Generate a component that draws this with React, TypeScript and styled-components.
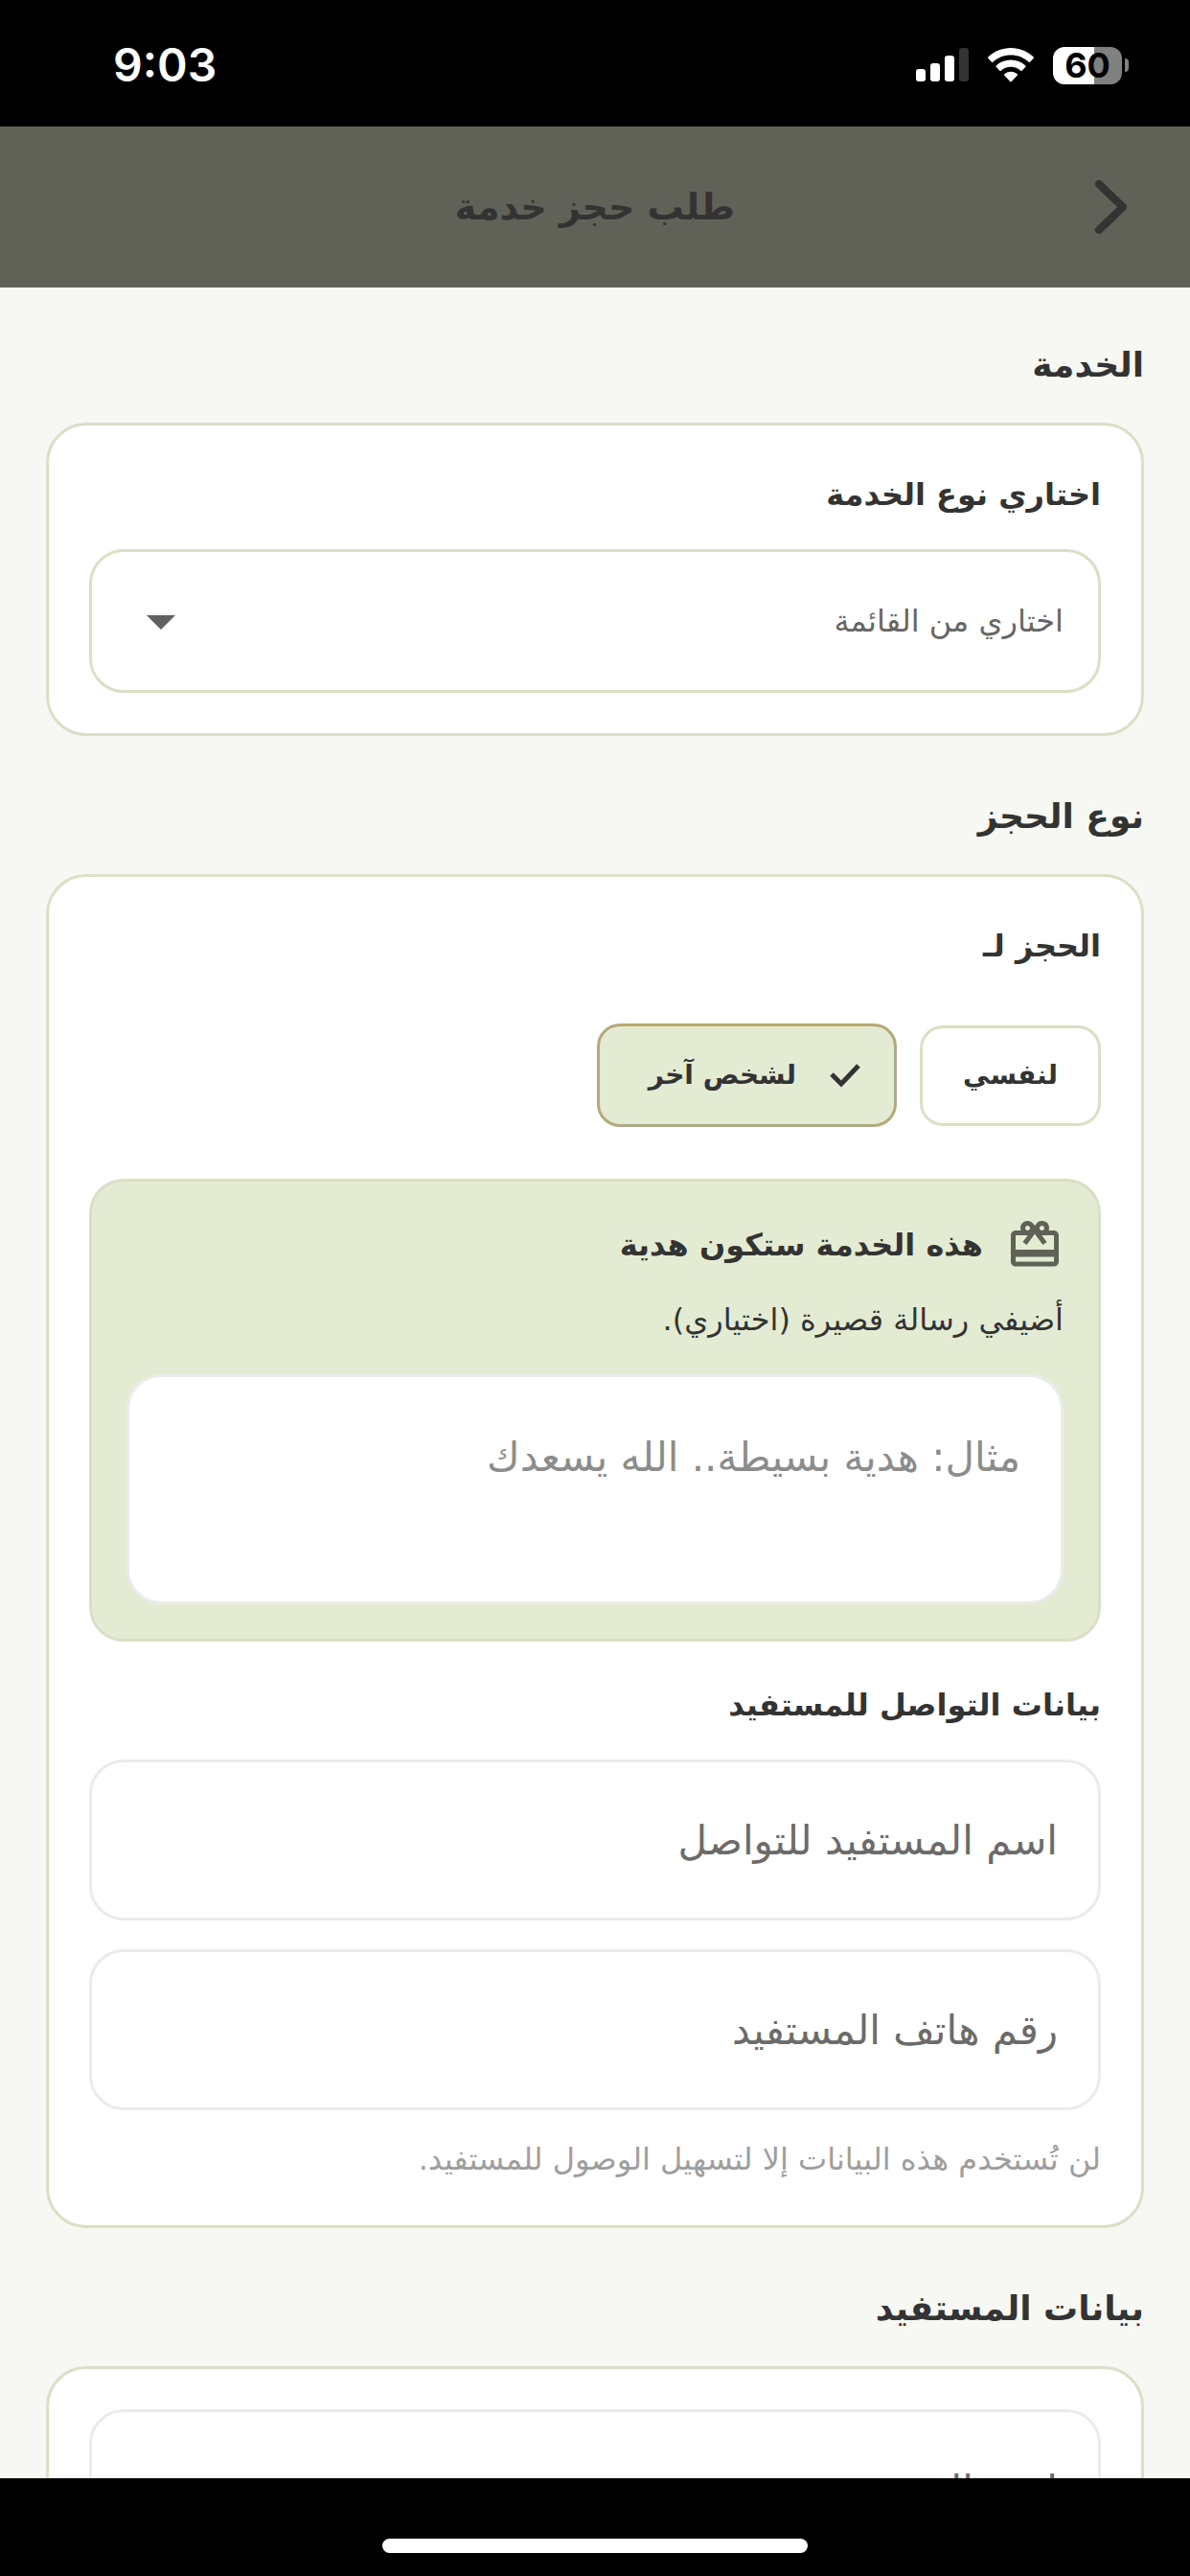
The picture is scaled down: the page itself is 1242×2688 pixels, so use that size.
import React, { useState } from "react";
import styled, { createGlobalStyle } from "styled-components";
import { MdArrowDropDown, MdCardGiftcard } from "react-icons/md";

const color = {
  ink: "#333333",
  olive: "#606157",
  page: "#f7f8f4",
  sage: "#e3ebd3",
  line: "#dbdfc6",
  gold: "#b5a97a",
  inputLine: "#ebebeb",
};

const GlobalStyle = createGlobalStyle`
  *, *::before, *::after { box-sizing: border-box; }
  body {
    margin: 0;
    background: #000000;
    color: ${color.ink};
    font-family: "DejaVu Sans", "Noto Sans", sans-serif;
  }
  button, input, textarea, select { font: inherit; color: inherit; }
  h1, h2, h3, p { margin: 0; }
`;

const Screen = styled.div`
  display: flex;
  flex-direction: column;
  height: 100vh;
  overflow: hidden;
  background: ${color.page};
`;

const StatusBar = styled.div`
  display: flex;
  flex: none;
  align-items: center;
  justify-content: space-between;
  height: 132px;
  padding: 4px 64px 0 118px;
  background: #000000;
  color: #ffffff;
  font-family: Inter, "Liberation Sans", sans-serif;
`;

const Clock = styled.time`
  font-size: 48px;
  font-weight: 600;
  line-height: 60px;
`;

const StatusIcons = styled.div`
  display: flex;
  align-items: center;
  gap: 20px;
`;

const Battery = styled.div`
  display: flex;
  align-items: center;
  gap: 3px;
`;

const BatteryBody = styled.span`
  width: 72px;
  height: 39px;
  border-radius: 12px;
  background: linear-gradient(to right, #ffffff 60%, #808080 60%);
  color: #000000;
  font-size: 36px;
  font-weight: 700;
  line-height: 39px;
  text-align: center;
`;

const BatteryTip = styled.span`
  width: 4px;
  height: 14px;
  border-radius: 0 4px 4px 0;
  background: #808080;
`;

const Header = styled.header`
  display: grid;
  flex: none;
  grid-template-columns: 1fr auto 1fr;
  align-items: center;
  height: 168px;
  padding: 0 48px;
  background: ${color.olive};
`;

const BackButton = styled.button`
  display: flex;
  justify-self: start;
  padding: 0;
  border: 0;
  background: none;
  color: ${color.ink};
`;

const HeaderTitle = styled.h1`
  font-size: 38px;
  font-weight: 700;
  line-height: 72px;
`;

const Content = styled.main`
  display: flex;
  flex: 1;
  flex-direction: column;
  gap: 48px;
  min-height: 0;
  padding: 45px 48px 0;
  overflow: hidden;
`;

const Section = styled.section`
  display: flex;
  flex: none;
  flex-direction: column;
  gap: 24px;
`;

const SectionTitle = styled.h2`
  font-size: 36px;
  font-weight: 700;
  line-height: 72px;
`;

const Card = styled.div`
  display: flex;
  flex-direction: column;
  gap: 36px;
  padding: 42px;
  border: 3px solid ${color.line};
  border-radius: 42px;
  background: #ffffff;
`;

const Group = styled.div`
  display: flex;
  flex-direction: column;
  gap: 27px;
`;

const GroupLabel = styled.h3`
  font-size: 32px;
  font-weight: 700;
  line-height: 60px;
`;

const SelectBox = styled.div`
  display: grid;
  align-items: center;

  > * { grid-area: 1 / 1; }

  > svg {
    justify-self: end;
    margin-inline-end: 39px;
    color: #616161;
    pointer-events: none;
  }
`;

const Select = styled.select`
  width: 100%;
  height: 150px;
  padding: 0 36px;
  border: 3px solid ${color.line};
  border-radius: 36px;
  appearance: none;
  background: #ffffff;
  color: #666666;
  font-size: 32px;
`;

const ChipRow = styled.div`
  display: flex;
  align-items: center;
  gap: 24px;
  padding: 24px 0 18px;
`;

const Chip = styled.button<{ $selected: boolean }>`
  display: flex;
  align-items: center;
  gap: 33px;
  height: ${(p) => (p.$selected ? 108 : 105)}px;
  padding-block: 0;
  padding-inline: ${(p) => (p.$selected ? "33px 51px" : "42px")};
  border: 3px solid ${(p) => (p.$selected ? color.gold : color.line)};
  border-radius: 24px;
  background: ${(p) => (p.$selected ? color.sage : "#ffffff")};
  font-size: 28px;
  font-weight: 700;
  line-height: 48px;
`;

const GiftBox = styled.div`
  display: flex;
  flex-direction: column;
  gap: 21px;
  padding: 36px;
  border: 3px solid ${color.line};
  border-radius: 36px;
  background: ${color.sage};
`;

const GiftHeading = styled.div`
  display: flex;
  align-items: center;
  gap: 24px;

  > svg { color: ${color.olive}; }
`;

const MessageGroup = styled.div`
  display: flex;
  flex-direction: column;
  gap: 30px;
`;

const MessageLabel = styled.label`
  font-size: 32px;
  line-height: 54px;
`;

const MessageInput = styled.textarea`
  display: block;
  width: 100%;
  height: 240px;
  padding: 51px 42px;
  border: 3px solid ${color.inputLine};
  border-radius: 36px;
  background: #ffffff;
  font-size: 42px;
  line-height: 66px;
  resize: none;

  &::placeholder { color: #8c8c8c; opacity: 1; }
`;

const FieldStack = styled.div`
  display: flex;
  flex-direction: column;
  gap: 30px;
`;

const Field = styled.input`
  width: 100%;
  height: 168px;
  padding: 0 42px;
  border: 3px solid ${color.inputLine};
  border-radius: 36px;
  background: #ffffff;
  font-size: 42px;

  &::placeholder { color: #6b6b6b; opacity: 1; }
`;

const ContactGroup = styled.div`
  display: flex;
  flex-direction: column;
  gap: 24px;
`;

const Helper = styled.p`
  color: #9e9e9e;
  font-size: 32px;
  line-height: 54px;
`;

const HomeBar = styled.div`
  display: flex;
  flex: none;
  justify-content: center;
  height: 102px;
  padding-top: 63px;
  background: #000000;
`;

const HomeIndicator = styled.span`
  width: 444px;
  height: 15px;
  border-radius: 8px;
  background: #ffffff;
`;

const SignalIcon = () => (
  <svg width="55" height="36" viewBox="0 0 55 36" fill="#ffffff" aria-hidden="true">
    <rect x="0" y="22" width="10" height="13" rx="3" />
    <rect x="15" y="16" width="10" height="19" rx="3" />
    <rect x="30" y="8" width="10" height="27" rx="3" />
    <rect x="45" y="0" width="10" height="35" rx="3" fill="#333333" />
  </svg>
);

const WifiIcon = () => (
  <svg width="48" height="36" viewBox="0 0 48 36" fill="#ffffff" aria-hidden="true">
    <path d="M24 0C33 0 41.400 3.500 47.500 9.300Q48.300 10.200 47.500 11L44 14.700Q43.400 15.300 42.700 14.700C37.700 10.100 31.200 7.500 24 7.500S10.300 10.100 5.300 14.700Q4.600 15.300 4 14.700L.5 11Q-.3 10.200.5 9.300C6.600 3.500 15 0 24 0Z" />
    <path d="M24 12.500C29.800 12.500 35.100 14.700 39.100 18.300Q40 19.200 39.200 20L35.600 23.700Q35 24.300 34.200 23.700C31.500 21.300 27.900 19.800 24 19.800S16.500 21.300 13.800 23.700Q13 24.300 12.400 23.700L8.800 20Q8 19.200 8.900 18.300C12.900 14.700 18.200 12.500 24 12.500Z" />
    <path d="M24 24.800C26.600 24.800 28.900 25.700 30.700 27.200Q31.500 28 30.700 28.800L24.800 35Q24 35.800 23.200 35L17.300 28.800Q16.500 28 17.300 27.200C19.100 25.700 21.400 24.800 24 24.800Z" />
  </svg>
);

const ChevronIcon = () => (
  <svg width="72" height="72" viewBox="0 0 72 72" fill="none" stroke="currentColor" strokeWidth="8" strokeLinecap="round" strokeLinejoin="round" aria-hidden="true">
    <path d="M25 12L50 36L25 60" />
  </svg>
);

const CheckIcon = () => (
  <svg width="36" height="36" viewBox="0 0 36 36" fill="none" stroke="currentColor" strokeWidth="5" aria-hidden="true">
    <path d="M4 17L14 27L32 8" />
  </svg>
);

const CHOICES = [
  { id: "self", label: "لنفسي" },
  { id: "other", label: "لشخص آخر" },
];

export default function App() {
  const [bookingFor, setBookingFor] = useState("other");

  return (
    <>
      <GlobalStyle />
      <Screen dir="rtl" lang="ar">
        <StatusBar dir="ltr">
          <Clock>9:03</Clock>
          <StatusIcons>
            <SignalIcon />
            <WifiIcon />
            <Battery>
              <BatteryBody>60</BatteryBody>
              <BatteryTip />
            </Battery>
          </StatusIcons>
        </StatusBar>

        <Header>
          <BackButton type="button" aria-label="رجوع">
            <ChevronIcon />
          </BackButton>
          <HeaderTitle>طلب حجز خدمة</HeaderTitle>
        </Header>

        <Content>
          <Section>
            <SectionTitle>الخدمة</SectionTitle>
            <Card>
              <Group>
                <GroupLabel as="label" htmlFor="service">اختاري نوع الخدمة</GroupLabel>
                <SelectBox>
                  <Select id="service" defaultValue="">
                    <option value="">اختاري من القائمة</option>
                  </Select>
                  <MdArrowDropDown size={72} aria-hidden="true" />
                </SelectBox>
              </Group>
            </Card>
          </Section>

          <Section>
            <SectionTitle>نوع الحجز</SectionTitle>
            <Card>
              <Group role="group" aria-labelledby="booking-for">
                <GroupLabel id="booking-for">الحجز لـ</GroupLabel>
                <ChipRow>
                  {CHOICES.map(({ id, label }) => (
                    <Chip
                      key={id}
                      type="button"
                      $selected={bookingFor === id}
                      aria-pressed={bookingFor === id}
                      onClick={() => setBookingFor(id)}
                    >
                      {bookingFor === id && <CheckIcon />}
                      {label}
                    </Chip>
                  ))}
                </ChipRow>
              </Group>

              <GiftBox>
                <GiftHeading>
                  <MdCardGiftcard size={60} aria-hidden="true" />
                  <GroupLabel>هذه الخدمة ستكون هدية</GroupLabel>
                </GiftHeading>
                <MessageGroup>
                  <MessageLabel htmlFor="message">أضيفي رسالة قصيرة (اختياري).</MessageLabel>
                  <MessageInput id="message" placeholder="مثال: هدية بسيطة.. الله يسعدك" />
                </MessageGroup>
              </GiftBox>

              <Group>
                <GroupLabel>بيانات التواصل للمستفيد</GroupLabel>
                <ContactGroup>
                  <FieldStack>
                    <Field aria-label="اسم المستفيد للتواصل" placeholder="اسم المستفيد للتواصل" />
                    <Field dir="rtl" type="tel" aria-label="رقم هاتف المستفيد" placeholder="رقم هاتف المستفيد" />
                  </FieldStack>
                  <Helper>لن تُستخدم هذه البيانات إلا لتسهيل الوصول للمستفيد.</Helper>
                </ContactGroup>
              </Group>
            </Card>
          </Section>

          <Section>
            <SectionTitle>بيانات المستفيد</SectionTitle>
            <Card>
              <Field aria-label="اسم المستفيد" placeholder="اسم المستفيد" />
            </Card>
          </Section>
        </Content>

        <HomeBar>
          <HomeIndicator />
        </HomeBar>
      </Screen>
    </>
  );
}
